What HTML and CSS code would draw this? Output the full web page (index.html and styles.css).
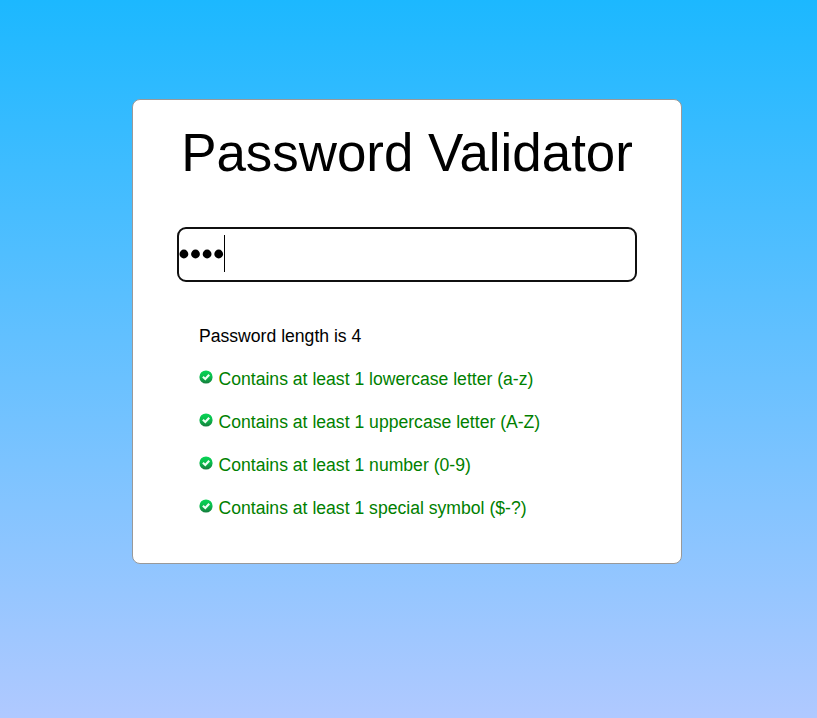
FILE: index.html
```html
<!DOCTYPE html>
<html lang="en">
<head>
<meta charset="utf-8">
<title>Password Validator</title>
<link rel="stylesheet" href="styles.css">
</head>
<body>
<svg class="defs" aria-hidden="true">
  <linearGradient id="green" x1="0" y1="0" x2="0" y2="1"><stop offset="0" stop-color="#08d455"/><stop offset=".5" stop-color="#0abb4c"/><stop offset="1" stop-color="#167a3c"/></linearGradient>
  <symbol id="check" viewBox="0 0 14 14"><circle cx="7" cy="7" r="6.6" fill="url(#green)"/><path d="M3.9 6.8 6.3 9 10.2 4.8" fill="none" stroke="#effff3" stroke-width="2.2"/></symbol>
</svg>
<main class="card">
  <h1 class="title">Password Validator</h1>
  <div class="field"><svg class="dots" viewBox="0 0 45 10"><circle cx="4.9" cy="5" r="4.4"/><circle cx="16.5" cy="5" r="4.4"/><circle cx="28.1" cy="5" r="4.4"/><circle cx="39.7" cy="5" r="4.4"/></svg><span class="caret"></span></div>
  <div class="rules">
    <p>Password length is 4</p>
    <p class="valid"><svg class="icon"><use href="#check"/></svg>Contains at least 1 lowercase letter (a-z)</p>
    <p class="valid"><svg class="icon"><use href="#check"/></svg>Contains at least 1 uppercase letter (A-Z)</p>
    <p class="valid"><svg class="icon"><use href="#check"/></svg>Contains at least 1 number (0-9)</p>
    <p class="valid"><svg class="icon"><use href="#check"/></svg>Contains at least 1 special symbol ($-?)</p>
  </div>
</main>
</body>
</html>
```
FILE: styles.css
```css
* { box-sizing: border-box; }
body {
  margin: 0;
  height: 718px;
  overflow: hidden;
  padding: 99px 0 0 132px;
  font-family: "Liberation Sans", Arial, sans-serif;
  background: linear-gradient(#1cb8ff, #b0c9ff);
}
.defs { display: block; width: 0; height: 0; }
.card {
  width: 550px;
  height: 465px;
  padding: 23px 44px 0;
  background: #fff;
  border: 1px solid #999;
  border-radius: 8px;
}
.title {
  margin: 0;
  height: 60px;
  line-height: 60px;
  font-size: 52.9px;
  font-weight: 400;
  text-align: center;
  white-space: nowrap;
}
.field {
  display: flex;
  align-items: flex-start;
  width: 460px;
  height: 55px;
  margin-top: 44px;
  padding-top: 6px;
  border: 2px solid #101010;
  border-radius: 9px;
}
.dots { width: 45px; height: 10px; margin-top: 14px; }
.caret { width: 1px; height: 37px; background: #000; }
.rules { padding: 43px 0 0 22px; font-size: 17.6px; line-height: 23px; }
.rules p { margin: 0 0 20px; white-space: nowrap; }
.valid { display: flex; color: green; }
.icon { width: 14px; height: 14px; margin: 2px 5.5px 0 0; }
```
